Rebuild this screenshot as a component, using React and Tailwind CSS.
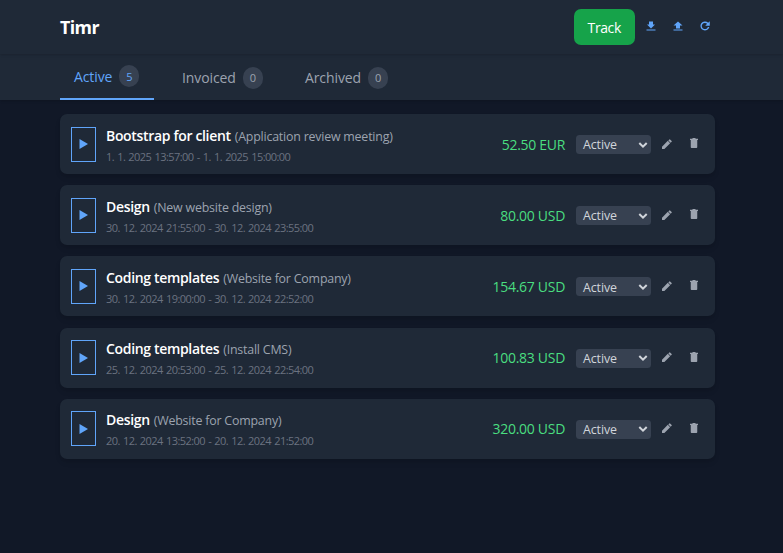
import React from "react";

const entries = [
  { name: "Bootstrap for client", note: "Application review meeting", time: "1. 1. 2025 13:57:00 - 1. 1. 2025 15:00:00", amount: "52.50 EUR" },
  { name: "Design", note: "New website design", time: "30. 12. 2024 21:55:00 - 30. 12. 2024 23:55:00", amount: "80.00 USD" },
  { name: "Coding templates", note: "Website for Company", time: "30. 12. 2024 19:00:00 - 30. 12. 2024 22:52:00", amount: "154.67 USD" },
  { name: "Coding templates", note: "Install CMS", time: "25. 12. 2024 20:53:00 - 25. 12. 2024 22:54:00", amount: "100.83 USD" },
  { name: "Design", note: "Website for Company", time: "20. 12. 2024 13:52:00 - 20. 12. 2024 21:52:00", amount: "320.00 USD" },
];

const icons = {
  download: "M20 9h-4V3H8v6H4l8 8 8-8zM3 19v2h18v-2H3z",
  upload: "M8 17h8v-6h5l-9-8-9 8h5v6zM3 19v2h18v-2H3z",
  refresh: "M18.4 5.6A9 9 0 1 0 20.7 14h-3A6.2 6.2 0 1 1 16.3 7.7L12.5 11.5h9V2.5l-3.1 3.1z",
  pencil: "M2 17.25V22h4.75L18.3 10.4l-4.7-4.7L2 17.25zM21.3 7.4a1 1 0 0 0 0-1.41l-3.2-3.2a1 1 0 0 0-1.41 0l-2 2 4.6 4.6 2-2z",
  trash: "M5.5 6v14c0 1.1.9 2 2 2h9c1.1 0 2-.9 2-2V6h-13zM20 3.5h-4.5l-1-1.5h-5l-1 1.5H4V6h16V3.5z",
};

function Icon({ name, className }) {
  return (
    <svg viewBox="0 0 24 24" fill="currentColor" className={className}>
      <path d={icons[name]} />
    </svg>
  );
}

function Tab({ label, count, active, className }) {
  return (
    <div className={`flex h-[45.5px] items-center ${active ? "border-b-2 border-[#60a5fa] pt-px text-[#60a5fa]" : "pt-0.5 text-[#9ca3af]"} ${className}`}>
      <span className="text-[14px] tracking-[-0.1px]">{label}</span>
      <span className="ml-[7px] flex h-[22px] w-5 items-center justify-center rounded-full bg-[#374151] pt-px text-[11px]">{count}</span>
    </div>
  );
}

function Entry({ entry }) {
  return (
    <div className="flex h-[60px] items-center rounded-[7px] bg-[#1f2937] pl-[11px] pr-[15px] shadow-md">
      <button className="flex h-[35px] w-[25px] shrink-0 items-center justify-center border border-[#60a5fa] text-[#60a5fa]">
        <svg viewBox="0 0 9 10" className="h-[10px] w-[9px]" fill="currentColor">
          <path d="M0.5 0L9 5L0.5 10Z" />
        </svg>
      </button>
      <div className="ml-[10px] flex-1 whitespace-nowrap pt-[1px]">
        <div className="h-[23px] leading-[23px]">
          <span className="text-[14px] font-semibold tracking-[-0.33px] text-white">{entry.name}</span>
          <span className="ml-[4px] text-[12.4px] tracking-[-0.2px] text-[#9ca3af]">({entry.note})</span>
        </div>
        <div className="h-[19px] text-[11px] leading-[20px] tracking-[-0.55px] [word-spacing:0.8px] text-[#6b7280]">{entry.time}</div>
      </div>
      <span className="mr-[11px] text-[14px] tracking-[-0.3px] text-[#4ade80]">{entry.amount}</span>
      <button className="mt-px flex h-[19px] w-[75px] items-center justify-between rounded-[3.5px] bg-[#374151] pl-[7px] pr-[3px] text-[12.4px] tracking-[-0.1px] text-[#d1d5db]">
        <span className="pt-0.5">Active</span>
        <svg viewBox="0 0 10 8" className="h-2 w-[10px]" fill="none" stroke="currentColor" strokeWidth="2">
          <path d="M1.3 2L5 5.7L8.7 2" />
        </svg>
      </button>
      <Icon name="pencil" className="mb-px ml-[10px] h-3 w-3 text-[#9ca3af]" />
      <Icon name="trash" className="mb-0.5 ml-[15px] h-3 w-3 text-[#9ca3af]" />
    </div>
  );
}

export default function App() {
  return (
    <div className="min-h-screen bg-[#111827] font-['Open_Sans','Noto_Sans',sans-serif]">
      <header className="relative z-10 h-[54px] bg-[#1f2937] px-[60px] shadow-sm">
        <div className="flex h-[54px] w-[655px] items-center">
          <h1 className="flex-1 pt-px text-[17.8px] font-bold tracking-[-0.6px] text-white">Timr</h1>
          <button className="h-[35.5px] w-[61.5px] rounded-[7px] bg-[#16a34a] text-[14px] tracking-[-0.4px] text-white">Track</button>
          <Icon name="download" className="mb-0.5 ml-[10px] h-3 w-3 text-[#60a5fa]" />
          <Icon name="upload" className="mb-0.5 ml-[15px] h-3 w-3 text-[#60a5fa]" />
          <Icon name="refresh" className="mb-0.5 ml-[15px] mr-1 h-3 w-3 text-[#60a5fa]" />
        </div>
      </header>
      <nav className="flex h-[45.5px] bg-[#1f2937] pl-[60px] shadow-sm">
        <Tab label="Active" count="5" active className="w-[94px] pl-[14px]" />
        <Tab label="Invoiced" count="0" className="ml-[14px] w-[109px] pl-[14px]" />
        <Tab label="Archived" count="0" className="ml-[14px] w-[110px] pl-[14px]" />
      </nav>
      <main className="flex w-[715px] flex-col gap-[11.2px] pl-[60px] pt-[14.5px]">
        {entries.map((entry) => (
          <Entry key={entry.time} entry={entry} />
        ))}
      </main>
    </div>
  );
}
